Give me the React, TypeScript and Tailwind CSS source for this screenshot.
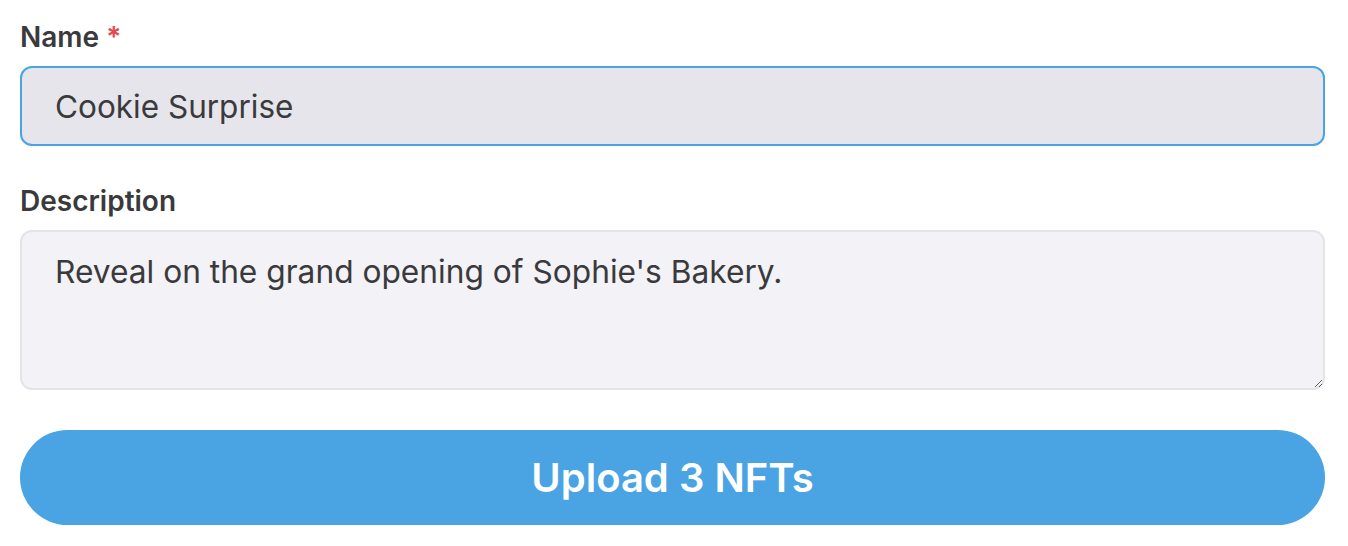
export default function App() {
  return (
    <div className="bg-white w-[1348px] h-[546px] pl-5 pr-[23px] pt-[21px] font-['Inter',sans-serif] text-[#3a3a3c]">
      <label className="block text-[28px] font-semibold leading-8">
        Name <span className="text-[#e5484d]">*</span>
      </label>
      <input
        className="mt-[13px] block w-full h-[80px] rounded-xl border-2 border-[#4aa3e2] bg-[#e5e5eb] px-[33px] text-[31.5px] text-[#3a3a3c] outline-none"
        defaultValue="Cookie Surprise"
      />
      <label className="mt-[39px] block text-[28px] font-semibold leading-8">Description</label>
      <textarea
        className="mt-[13px] block w-full h-[160px] rounded-xl border-2 border-[#e3e3e8] bg-[#f2f2f7] px-[33px] py-[18px] text-[31.7px] leading-[44px] text-[#3a3a3c] outline-none"
        defaultValue="Reveal on the grand opening of Sophie's Bakery."
      />
      <button className="mt-[40px] block w-full h-[95px] rounded-full bg-[#4aa3e2] text-white text-[40px] font-semibold">
        Upload 3 NFTs
      </button>
    </div>
  )
}
